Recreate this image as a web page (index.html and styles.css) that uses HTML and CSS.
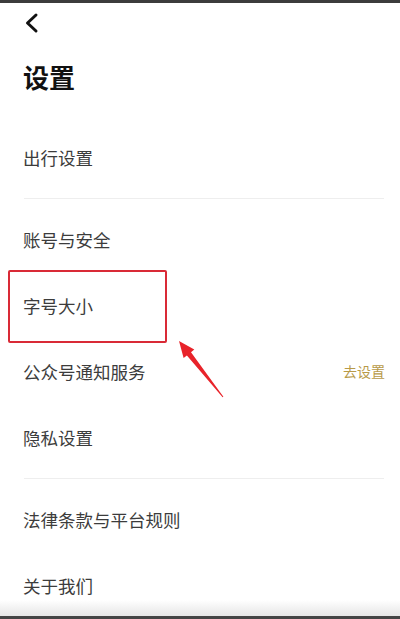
FILE: index.html
```html
<!DOCTYPE html>
<html lang="zh-CN">

<head>
    <meta charset="UTF-8">
    <meta name="viewport" content="width=device-width, initial-scale=1.0">
    <title>设置</title>
    <link rel="stylesheet" href="styles.css">
</head>

<body>
    <div class="page">
        <div class="status-line"></div>

        <div class="nav">
            <svg class="back" width="16" height="22" viewBox="0 0 16 22">
                <path d="M12 3 L3.5 11 L12 19" fill="none" stroke="#111" stroke-width="3" stroke-linecap="round" stroke-linejoin="round"/>
            </svg>
        </div>

        <h1 class="title">设置</h1>

        <div class="group">
            <div class="row">出行设置</div>
        </div>

        <div class="divider"></div>

        <div class="group">
            <div class="row">账号与安全</div>
            <div class="row">字号大小</div>
            <div class="row">
                <span>公众号通知服务</span>
                <span class="action">去设置</span>
            </div>
            <div class="row">隐私设置</div>
        </div>

        <div class="divider"></div>

        <div class="group">
            <div class="row">法律条款与平台规则</div>
            <div class="row">关于我们</div>
        </div>

        <!-- annotation drawn over the screenshot -->
        <div class="mark-box"></div>
        <svg class="mark-arrow" width="60" height="70" viewBox="170 335 60 70">
            <polygon points="179,341 183.6,358 186.9,355.4 222.6,397.3 223.4,396.7 191,352.2 194.3,349.6" fill="#e8232a"/>
        </svg>

        <div class="bottom-edge"></div>
    </div>
</body>

</html>
```

FILE: styles.css
```css
body {
    margin: 0;
    background: #fff;
    font-family: "Noto Sans CJK SC", "Noto Sans", sans-serif;
    overflow: hidden;
}

.page {
    position: relative;
    width: 400px;
    height: 619px;
    overflow: hidden;
}

.status-line {
    height: 3px;
    background: #3c3c3c;
}

.nav {
    height: 40px;
    display: flex;
    align-items: center;
    padding-left: 24px;
}

.back {
    display: block;
}

.title {
    margin: 20px 0 0;
    padding-left: 23px;
    font-size: 26px;
    line-height: 28px;
    font-weight: 700;
    color: #111;
}

.title + .group {
    margin-top: 33px;
}

.row {
    height: 66px;
    display: flex;
    align-items: center;
    justify-content: space-between;
    padding: 0 15px 0 23px;
    font-size: 17.5px;
    color: #3c3c3c;
}

.action {
    font-size: 14px;
    color: #b89a48;
}

.divider {
    height: 1px;
    margin: 8px 16px 7px 24px;
    background: #eeeeee;
}

.mark-box {
    position: absolute;
    left: 8px;
    top: 270px;
    width: 155px;
    height: 69px;
    border: 2px solid #d92a36;
    border-radius: 2px;
}

.mark-arrow {
    position: absolute;
    left: 170px;
    top: 335px;
}

.bottom-edge {
    position: absolute;
    left: 0;
    right: 0;
    bottom: 0;
    height: 16px;
    background: linear-gradient(to bottom, rgba(235, 235, 235, 0), #e6e6e6);
    border-bottom: 3px solid #444;
}
```
